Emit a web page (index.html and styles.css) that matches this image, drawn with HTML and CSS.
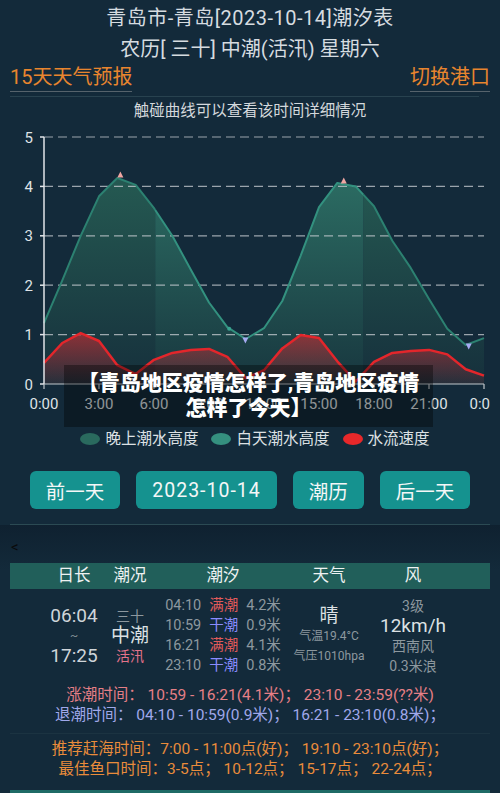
FILE: index.html
```html
<!DOCTYPE html>
<html lang="zh-CN">
<head>
    <meta charset="UTF-8">
    <meta name="viewport" content="width=device-width, initial-scale=1.0">
    <title>青岛潮汐表</title>
    <link rel="stylesheet" href="styles.css">
</head>
<body>

    <header class="title">
        <h1>青岛市-青岛[2023-10-14]潮汐表</h1>
        <p>农历[ 三十] 中潮(活汛) 星期六</p>
    </header>

    <nav class="links">
        <a href="#">15天天气预报</a>
        <a href="#">切换港口</a>
    </nav>
    <div class="divider"></div>
    <div class="hint">触碰曲线可以查看该时间详细情况</div>

    <div class="chart-wrap">
        <svg id="tide-chart" class="chart" width="490" height="308" viewBox="0 121 490 308"></svg>
        <div class="overlay">【青岛地区疫情怎样了,青岛地区疫情<br>怎样了今天】</div>
    </div>

    <div class="legend">
        <span><i class="night"></i>晚上潮水高度</span>
        <span><i class="day"></i>白天潮水高度</span>
        <span><i class="flow"></i>水流速度</span>
    </div>

    <div class="buttons">
        <button>前一天</button>
        <button class="date">2023-10-14</button>
        <button>潮历</button>
        <button>后一天</button>
    </div>
    <div class="rule"></div>

    <div class="table-section">
        <div class="back">&lt;</div>
        <div class="tide-table">
            <div class="cols head">
                <span>日长</span>
                <span>潮况</span>
                <span>潮汐</span>
                <span>天气</span>
                <span>风</span>
            </div>
            <div class="cols body">
                <div class="day-len">
                    <div>06:04</div>
                    <div class="tilde">~</div>
                    <div>17:25</div>
                </div>
                <div class="state">
                    <div class="small">三十</div>
                    <div class="big">中潮</div>
                    <div class="pink">活汛</div>
                </div>
                <div class="tides">
                    <div><b>04:10</b><em class="high">满潮</em><b>4.2米</b></div>
                    <div><b>10:59</b><em class="low">干潮</em><b>0.9米</b></div>
                    <div><b>16:21</b><em class="high">满潮</em><b>4.1米</b></div>
                    <div><b>23:10</b><em class="low">干潮</em><b>0.8米</b></div>
                </div>
                <div class="weather">
                    <div class="big">晴</div>
                    <div class="tiny">气温19.4°C</div>
                    <div class="tiny">气压1010hpa</div>
                </div>
                <div class="wind">
                    <div class="small">3级</div>
                    <div class="big">12km/h</div>
                    <div class="small">西南风</div>
                    <div class="small">0.3米浪</div>
                </div>
            </div>
        </div>

        <div class="times">
            <p class="rise">涨潮时间： 10:59 - 16:21(4.1米)； 23:10 - 23:59(??米)</p>
            <p class="fall">退潮时间： 04:10 - 10:59(0.9米)； 16:21 - 23:10(0.8米)；</p>
        </div>
        <div class="times sea">
            <p>推荐赶海时间：7:00 - 11:00点(好)； 19:10 - 23:10点(好)；</p>
            <p>最佳鱼口时间：3-5点； 10-12点； 15-17点； 22-24点；</p>
        </div>
        <div class="next-bar"></div>
    </div>

    <script>
        // hourly values 0:00 .. 24:00
        const tide = [1.23, 2.1, 3.0, 3.8, 4.17, 4.03, 3.56, 3.0, 2.32, 1.65, 1.15, 0.91, 1.13,
                      1.68, 2.6, 3.58, 4.07, 4.0, 3.6, 2.9, 2.35, 1.72, 1.12, 0.79, 0.93];
        const flow = [0.43, 0.83, 1.03, 0.87, 0.38, 0.2, 0.49, 0.63, 0.69, 0.71, 0.55, 0.12, 0.28,
                      0.72, 0.99, 0.93, 0.46, 0.05, 0.45, 0.63, 0.67, 0.69, 0.6, 0.3, 0.17];
        const sunrise = 6 + 4 / 60;
        const sunset = 17 + 25 / 60;

        const px = h => 44 + h * 440 / 24;
        const py = v => 384 - v * 49.4;

        function valueAt(data, h) {
            const i = Math.floor(h);
            if (i >= data.length - 1) return data[data.length - 1];
            return data[i] + (data[i + 1] - data[i]) * (h - i);
        }

        function slice(data, from, to) {
            const pts = [[from, valueAt(data, from)]];
            for (let h = Math.ceil(from); h < to; h++) {
                if (h > from) pts.push([h, data[h]]);
            }
            pts.push([to, valueAt(data, to)]);
            return pts;
        }

        function line(pts) {
            return pts.map(p => px(p[0]).toFixed(1) + ',' + py(p[1]).toFixed(1)).join(' ');
        }

        function area(pts) {
            return line(pts) + ' ' + px(pts[pts.length - 1][0]).toFixed(1) + ',384 ' + px(pts[0][0]).toFixed(1) + ',384';
        }

        function drawChart() {
            const svg = document.getElementById('tide-chart');
            const night1 = slice(tide, 0, sunrise);
            const day = slice(tide, sunrise, sunset);
            const night2 = slice(tide, sunset, 24);
            const speed = slice(flow, 0, 24);
            let out = `
                <defs>
                    <linearGradient id="g-night" gradientUnits="userSpaceOnUse" x1="0" y1="175" x2="0" y2="384">
                        <stop offset="0" stop-color="#255a52"/>
                        <stop offset="1" stop-color="#16303c"/>
                    </linearGradient>
                    <linearGradient id="g-day" gradientUnits="userSpaceOnUse" x1="0" y1="175" x2="0" y2="384">
                        <stop offset="0" stop-color="#2c6d63"/>
                        <stop offset="1" stop-color="#18373f"/>
                    </linearGradient>
                    <linearGradient id="g-flow" gradientUnits="userSpaceOnUse" x1="0" y1="332" x2="0" y2="384">
                        <stop offset="0" stop-color="#dc2a30" stop-opacity="0.6"/>
                        <stop offset="1" stop-color="#dc2a30" stop-opacity="0.08"/>
                    </linearGradient>
                </defs>
                <polygon points="${area(night1)}" fill="url(#g-night)"/>
                <polygon points="${area(night2)}" fill="url(#g-night)"/>
                <polygon points="${area(day)}" fill="url(#g-day)"/>
                <polygon points="${area(speed)}" fill="url(#g-flow)"/>`;

            for (let v = 1; v <= 5; v++) {
                out += `<line class="grid" x1="44" x2="484" y1="${py(v)}" y2="${py(v)}"/>`;
            }

            out += `
                <polyline class="tide-night" points="${line(night1)}"/>
                <polyline class="tide-night" points="${line(night2)}"/>
                <polyline class="tide-day" points="${line(day)}"/>
                <polyline class="speed" points="${line(speed)}"/>
                <line class="axis" x1="44" x2="44" y1="137" y2="384"/>
                <line class="axis-x" x1="44" x2="484" y1="384" y2="384"/>`;

            for (let v = 0; v <= 5; v++) {
                out += `<line class="axis" x1="40" x2="44" y1="${py(v)}" y2="${py(v)}"/>`;
                out += `<text class="ylab" x="33" y="${py(v) + 5.5}">${v}</text>`;
            }
            for (let h = 0; h <= 24; h += 3) {
                out += `<line class="axis-x" x1="${px(h)}" x2="${px(h)}" y1="384" y2="389"/>`;
                out += `<text class="xlab" x="${px(h)}" y="409">${h % 24}:00</text>`;
            }

            // high / low tide markers
            const peak = (h, v) => `<polygon class="peak" points="${px(h) - 3},${py(v) + 1} ${px(h) + 3},${py(v) + 1} ${px(h)},${py(v) - 5}"/>`;
            const low = (h, v) => `<polygon class="trough" points="${px(h) - 3},${py(v) - 2} ${px(h) + 3},${py(v) - 2} ${px(h)},${py(v) + 4}"/>`;
            out += peak(4 + 10 / 60, 4.2) + peak(16 + 21 / 60, 4.08);
            out += low(10 + 59 / 60, 0.9) + low(23 + 10 / 60, 0.78);
            out += `<circle cx="${px(10.1)}" cy="${py(1.12)}" r="2" fill="#3aa391"/>`;

            svg.innerHTML = out;
        }

        document.addEventListener('DOMContentLoaded', drawChart);
    </script>

</body>
</html>
```

FILE: styles.css
```css
body {
    margin: 0;
    background: #132a3a;
    color: #d6dce0;
    font-family: Roboto, "Noto Sans CJK SC", sans-serif;
}

.title {
    text-align: center;
    padding-top: 3px;
}

.title h1,
.title p {
    margin: 0;
    font-size: 20px;
    font-weight: normal;
    line-height: 31px;
}

.title h1 {
    letter-spacing: 0.5px;
}

.links {
    display: flex;
    justify-content: space-between;
    margin: 0 10px;
}

.links a {
    color: #e8852e;
    text-decoration: none;
    font-size: 20px;
    line-height: 24px;
    padding-bottom: 2px;
    border-bottom: 1px solid #56636c;
}

.divider {
    margin: 4px 21px 0 10px;
    border-top: 1px solid #28424f;
}

.hint {
    margin-top: 4px;
    text-align: center;
    font-size: 15.5px;
    line-height: 20px;
    color: #d3d8dc;
}

.chart-wrap {
    position: relative;
}

.chart {
    display: block;
}

.chart .grid {
    stroke: #c9ced3;
    stroke-opacity: 0.75;
    stroke-width: 1.2;
    stroke-dasharray: 9 5;
}

.chart .axis {
    stroke: #e2e5e8;
    stroke-width: 1.5;
}

.chart .axis-x {
    stroke: #c2c7cc;
    stroke-width: 1.2;
}

.chart .tide-night,
.chart .tide-day,
.chart .speed {
    fill: none;
    stroke-linejoin: round;
}

.chart .tide-night {
    stroke: #2c8171;
    stroke-width: 2;
}

.chart .tide-day {
    stroke: #33917f;
    stroke-width: 2;
}

.chart .speed {
    stroke: #e3262b;
    stroke-width: 2.5;
}

.chart .peak {
    fill: #f0a6a2;
}

.chart .trough {
    fill: #a6aaf2;
}

.chart text {
    font-family: Roboto, sans-serif;
    font-size: 15px;
    fill: #dfe3e6;
}

.chart .ylab {
    text-anchor: end;
}

.chart .xlab {
    text-anchor: middle;
}

.overlay {
    position: absolute;
    left: 64px;
    top: 244px;
    width: 369px;
    height: 62px;
    box-sizing: border-box;
    padding-top: 6px;
    background: rgba(0, 0, 0, 0.35);
    color: #fff;
    font-size: 21px;
    font-weight: 900;
    line-height: 25px;
    text-align: center;
    white-space: nowrap;
}

.legend {
    display: flex;
    justify-content: center;
    gap: 13px;
    padding-left: 10px;
    font-size: 15.5px;
    line-height: 20px;
    color: #dde1e4;
}

.legend span {
    display: flex;
    align-items: center;
    gap: 5px;
}

.legend i {
    width: 20px;
    height: 12px;
    border-radius: 50%;
}

.legend .night {
    background: #2a6a5e;
}

.legend .day {
    background: #35907f;
}

.legend .flow {
    background: #e8282a;
}

.buttons {
    display: flex;
    justify-content: center;
    gap: 16px;
    margin-top: 22px;
}

.buttons button {
    height: 38px;
    padding: 0 16px;
    border: none;
    border-radius: 6px;
    background: #15928f;
    color: #f4f7f7;
    font-family: Roboto, "Noto Sans CJK SC", sans-serif;
    font-size: 19.5px;
}

.buttons .date {
    letter-spacing: 1px;
}

.rule {
    margin: 15px 10px 0;
    border-top: 1px solid #2b4a53;
}

.table-section {
    background: linear-gradient(#0f2130, #132a3a 45px);
}

.back {
    padding: 12px 0 0 11px;
    font-size: 15px;
    line-height: 20px;
    color: #0a0a0a;
}

.tide-table {
    margin: 6px 10px 0;
}

.cols {
    display: grid;
    grid-template-columns: 72px 40px 146px 66px 102px;
    padding-left: 28px;
    justify-items: center;
    white-space: nowrap;
}

.head {
    height: 26px;
    background: #215f5a;
    font-size: 16.5px;
    line-height: 26px;
    color: #eef2f2;
}

.body {
    align-items: center;
    padding: 7px 0 4px 28px;
    line-height: 20px;
}

.day-len {
    font-size: 19px;
    color: #cfd5d9;
    text-align: center;
}

.day-len .tilde {
    font-size: 12px;
    color: #7d8990;
}

.state,
.weather,
.wind {
    text-align: center;
}

.small {
    font-size: 14px;
    color: #8d989f;
}

.big {
    font-size: 19px;
    color: #dce1e4;
}

.pink {
    font-size: 14px;
    color: #e4738a;
}

.tiny {
    font-size: 12px;
    color: #8d989f;
}

.tides div {
    display: flex;
    gap: 8px;
    font-size: 14.5px;
}

.tides b {
    font-weight: normal;
    color: #8d989f;
}

.tides em {
    font-style: normal;
}

.tides .high {
    color: #e25a5a;
}

.tides .low {
    color: #8a8cff;
}

.times {
    margin: 5px 10px 0;
    text-align: center;
    font-size: 15.5px;
    line-height: 20px;
}

.times p {
    margin: 0;
}

.rise {
    color: #e57f86;
}

.fall {
    color: #a0a8ea;
}

.sea {
    margin-top: 8px;
    padding-top: 5px;
    border-top: 1px solid #1b3341;
    color: #e98c3b;
}

.next-bar {
    margin: 11px 10px 0;
    height: 6px;
    background: #1f6b66;
}
```
